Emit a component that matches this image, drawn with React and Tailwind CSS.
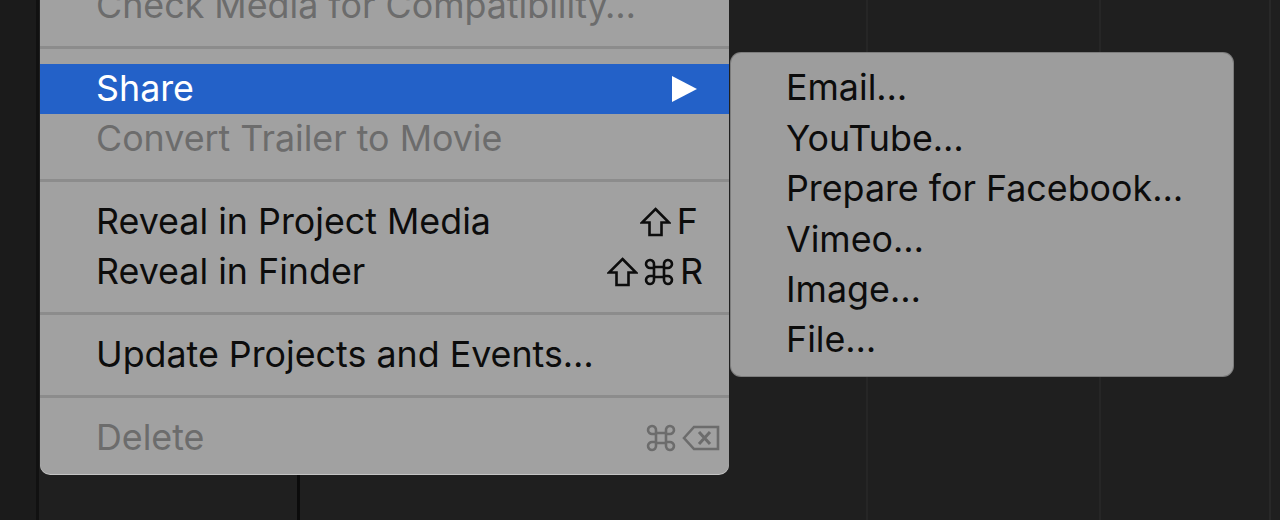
import { Fragment } from 'react'

const FONT = { fontFamily: 'Inter, "Liberation Sans", sans-serif' }

function ShiftKey() {
  return (
    <svg width="31" height="30" viewBox="0 0 31 30" className="shrink-0">
      <path d="M15.5 2 L29 15.5 L21.5 15.5 L21.5 28 L9.5 28 L9.5 15.5 L2 15.5 Z" fill="none" stroke="currentColor" strokeWidth="2.6" strokeLinejoin="miter" />
    </svg>
  )
}

function CmdKey() {
  return (
    <svg width="30" height="28" viewBox="0 0 30 28" className="shrink-0">
      <path
        d="M10 9 L20 9 L20 19 L10 19 Z M10 9 L10 6.5 A4 4 0 1 0 6.5 10 L10 10 M20 9 L20 6.5 A4 4 0 1 1 23.5 10 L20 10 M10 19 L10 21.5 A4 4 0 1 1 6.5 18 L10 18 M20 19 L20 21.5 A4 4 0 1 0 23.5 18 L20 18"
        fill="none"
        stroke="currentColor"
        strokeWidth="2.6"
      />
    </svg>
  )
}

function DeleteKey() {
  return (
    <svg width="38" height="28" viewBox="0 0 38 28" className="shrink-0">
      <path d="M2 14 L12 3 L36 3 L36 25 L12 25 Z" fill="none" stroke="currentColor" strokeWidth="2.6" strokeLinejoin="miter" />
      <path d="M17 8 L28 20 M28 8 L17 20" stroke="currentColor" strokeWidth="3" />
    </svg>
  )
}

function Separator() {
  return (
    <div className="h-[33px] flex items-center">
      <div className="w-full h-[3px] bg-[#8c8c8c]" />
    </div>
  )
}

function Row({ label, disabled, active, right, keys, pr = 'pr-[26px]' }) {
  return (
    <div
      className={`h-[50px] flex items-center justify-between pl-[56px] ${pr} text-[35.8px] ${
        active ? 'bg-[#2361c8] text-white' : disabled ? 'text-[#6c6c6c]' : 'text-[#0c0c0c]'
      }`}
    >
      <span className="whitespace-nowrap">{label}</span>
      {keys && <span className="flex items-center gap-[6px]">{keys}</span>}
      {right}
    </div>
  )
}

export default function App() {
  const subItems = ['Email…', 'YouTube…', 'Prepare for Facebook…', 'Vimeo…', 'Image…', 'File…']

  return (
    <div className="relative w-[1280px] h-[520px] overflow-hidden bg-[#1f1f1f]" style={FONT}>
      {/* window panes behind the menus */}
      <div className="flex h-full">
        <div className="w-[39px] bg-[#1b1b1b] border-r-[3px] border-[#111]" />
        <div className="w-[261px] border-r-[3px] border-[#0b0b0b]" />
        <div className="w-[568px] border-r-2 border-[#262626]" />
        <div className="w-[233px] border-r-2 border-[#262626]" />
        <div className="w-[170px] border-r-2 border-[#282828]" />
        <div className="flex-1" />
      </div>

      {/* main menu */}
      <div className="absolute left-[40px] top-[-19px] w-[689px] bg-[#a1a1a1] rounded-b-[10px] pb-[11px] shadow-[0_1px_0_#c4c4c4]">
        <Row label="Check Media for Compatibility…" disabled />
        <Separator />
        <Row
          label="Share"
          active
          pr="pr-[32px]"
          right={
            <svg width="25" height="26" viewBox="0 0 25 26">
              <path d="M0 0 L25 13 L0 26 Z" fill="white" />
            </svg>
          }
        />
        <Row label="Convert Trailer to Movie" disabled />
        <Separator />
        <Row
          label="Reveal in Project Media"
          pr="pr-[31px]"
          keys={
            <Fragment>
              <ShiftKey />
              <span>F</span>
            </Fragment>
          }
        />
        <Row
          label="Reveal in Finder"
          keys={
            <Fragment>
              <ShiftKey />
              <CmdKey />
              <span>R</span>
            </Fragment>
          }
        />
        <Separator />
        <Row label="Update Projects and Events…" />
        <Separator />
        <Row
          label="Delete"
          disabled
          pr="pr-[9px]"
          keys={
            <Fragment>
              <CmdKey />
              <DeleteKey />
            </Fragment>
          }
        />
      </div>

      {/* share submenu */}
      <div className="absolute left-[731px] top-[53px] w-[502px] bg-[#9d9d9d] rounded-[10px] pt-[10px] pb-[11px] shadow-[0_0_0_1px_#7d7d7d]">
        {subItems.map(item => (
          <div key={item} className="h-[50.4px] flex items-center pl-[55px] text-[35.8px] text-[#0c0c0c] whitespace-nowrap">
            {item}
          </div>
        ))}
      </div>
    </div>
  )
}
